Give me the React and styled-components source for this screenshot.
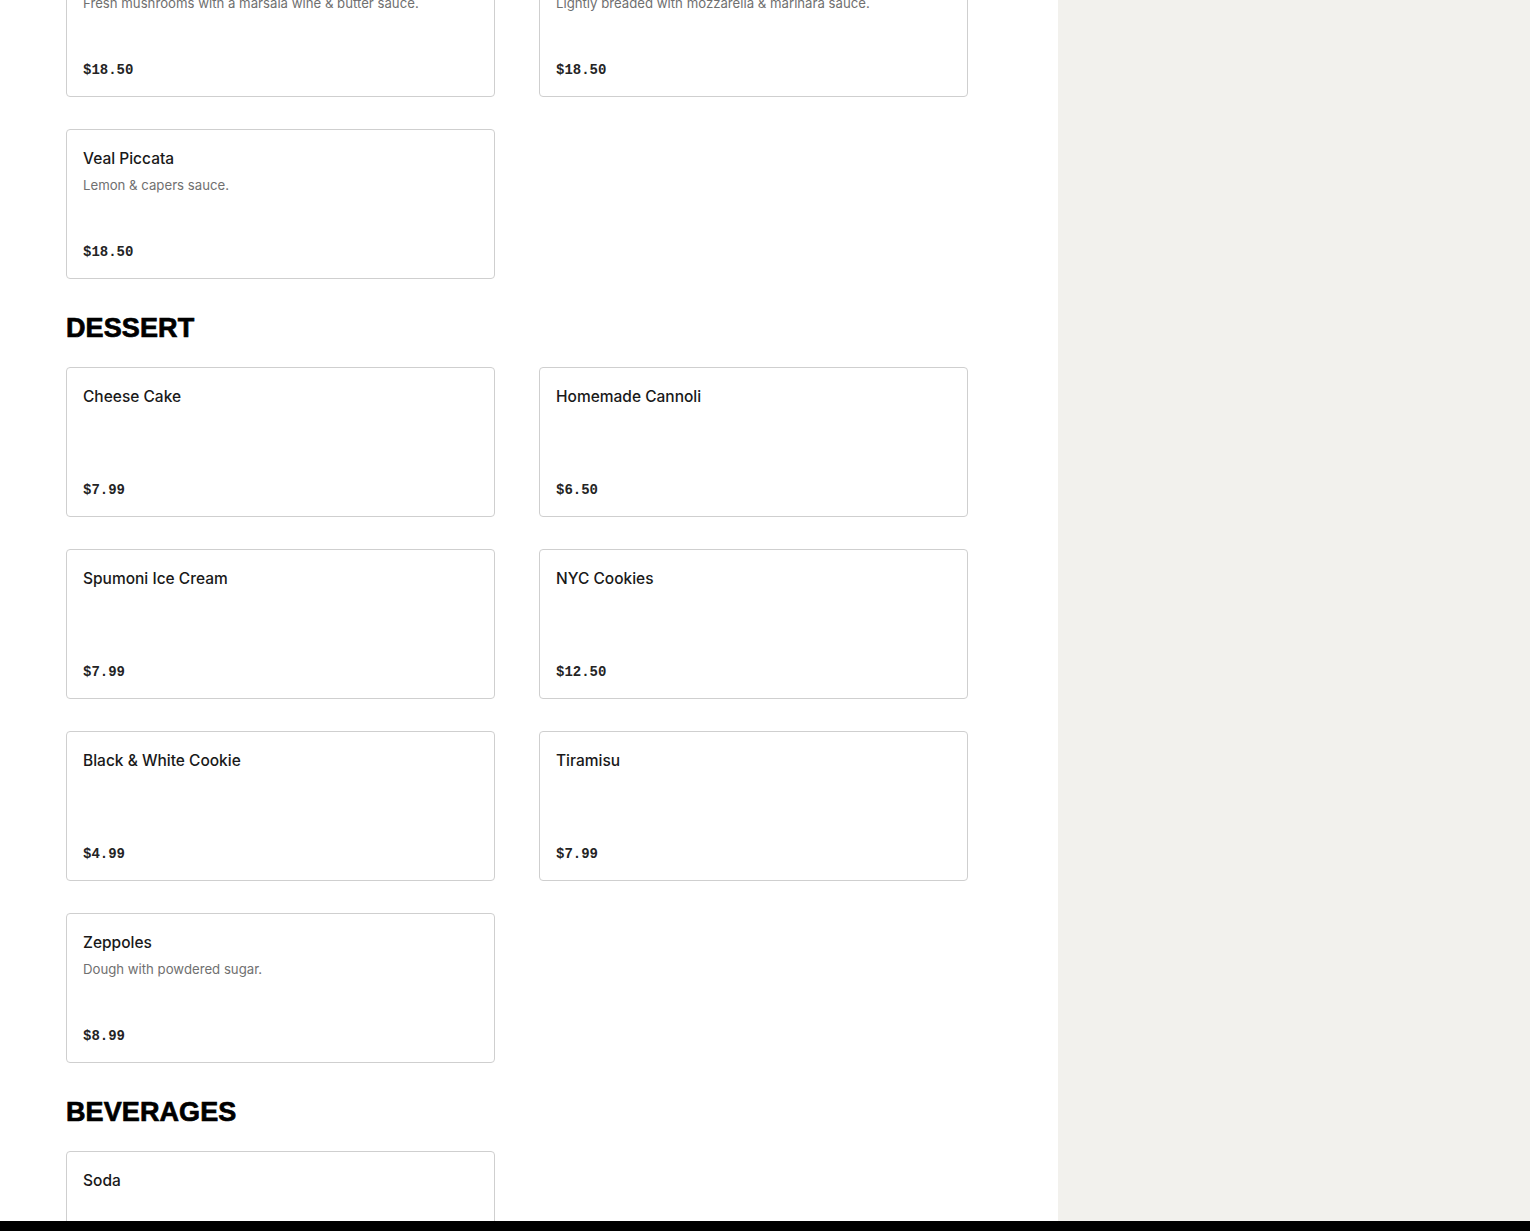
import React from 'react';
import styled, { createGlobalStyle } from 'styled-components';

const GlobalStyle = createGlobalStyle`
    html, body {
        margin: 0;
        padding: 0;
        background: #fff;
        font-family: "Liberation Sans", Arial, sans-serif;
        color: #191919;
    }
    * {
        box-sizing: border-box;
    }
`;

const Page = styled.div`
    height: 1231px;
    display: flex;
    flex-direction: column;
    overflow: hidden;
`;

const Body = styled.div`
    flex: 1;
    min-height: 0;
    display: grid;
    grid-template-columns: 1058px 1fr;
    overflow: hidden;
`;

const Main = styled.main`
    background: #fff;
    padding: 0 90px 0 66px;
    overflow: hidden;
`;

// page is scrolled part way down the menu
const Scroller = styled.div`
    margin-top: -53px;
`;

const Aside = styled.aside`
    background: #f2f1ed;
`;

const BottomBar = styled.div`
    height: 10px;
    background: #000;
    flex-shrink: 0;
`;

const Section = styled.section`
    & + & {
        margin-top: 33px;
    }
`;

const Heading = styled.h2`
    margin: 0 0 23px;
    font-family: "Liberation Sans", Arial, sans-serif;
    font-weight: 700;
    font-size: 27px;
    line-height: 32px;
    letter-spacing: 0.1px;
    color: #000;
    text-transform: uppercase;
    -webkit-text-stroke: 0.7px #000;
`;

const Grid = styled.div`
    display: grid;
    grid-template-columns: 429px 429px;
    column-gap: 44px;
    row-gap: 32px;
`;

const Card = styled.div`
    height: 150px;
    border: 1px solid #cfcfcf;
    border-radius: 4px;
    padding: 17px 16px 15px;
    display: flex;
    flex-direction: column;
    background: #fff;
`;

const Title = styled.div`
    font-family: Inter, "Liberation Sans", sans-serif;
    font-weight: 500;
    font-size: 15.5px;
    line-height: 24px;
    color: #191919;
`;

const Desc = styled.div`
    margin-top: 4px;
    font-family: Inter, "Liberation Sans", sans-serif;
    font-size: 13.2px;
    line-height: 20px;
    color: #707070;
`;

const Price = styled.div`
    margin-top: auto;
    font-family: "Liberation Mono", "DejaVu Sans Mono", monospace;
    font-weight: 700;
    font-size: 14px;
    line-height: 22px;
    color: #242424;
`;

const sections = [
    {
        name: null,
        items: [
            { title: 'Veal Marsala', desc: 'Fresh mushrooms with a marsala wine & butter sauce.', price: '$18.50' },
            { title: 'Veal Parmigiana', desc: 'Lightly breaded with mozzarella & marinara sauce.', price: '$18.50' },
            { title: 'Veal Piccata', desc: 'Lemon & capers sauce.', price: '$18.50' },
        ],
    },
    {
        name: 'Dessert',
        items: [
            { title: 'Cheese Cake', price: '$7.99' },
            { title: 'Homemade Cannoli', price: '$6.50' },
            { title: 'Spumoni Ice Cream', price: '$7.99' },
            { title: 'NYC Cookies', price: '$12.50' },
            { title: 'Black & White Cookie', price: '$4.99' },
            { title: 'Tiramisu', price: '$7.99' },
            { title: 'Zeppoles', desc: 'Dough with powdered sugar.', price: '$8.99' },
        ],
    },
    {
        name: 'Beverages',
        items: [
            { title: 'Soda', price: '$2.50' },
        ],
    },
];

function MenuItem({ item }) {
    return (
        <Card>
            <Title>{item.title}</Title>
            {item.desc && <Desc>{item.desc}</Desc>}
            <Price>{item.price}</Price>
        </Card>
    );
}

export default function App() {
    return (
        <Page>
            <GlobalStyle />
            <Body>
                <Main>
                    <Scroller>
                        {sections.map((s, i) => (
                            <Section key={i}>
                                {s.name && <Heading>{s.name}</Heading>}
                                <Grid>
                                    {s.items.map((item, j) => (
                                        <MenuItem key={j} item={item} />
                                    ))}
                                </Grid>
                            </Section>
                        ))}
                    </Scroller>
                </Main>
                <Aside />
            </Body>
            <BottomBar />
        </Page>
    );
}
